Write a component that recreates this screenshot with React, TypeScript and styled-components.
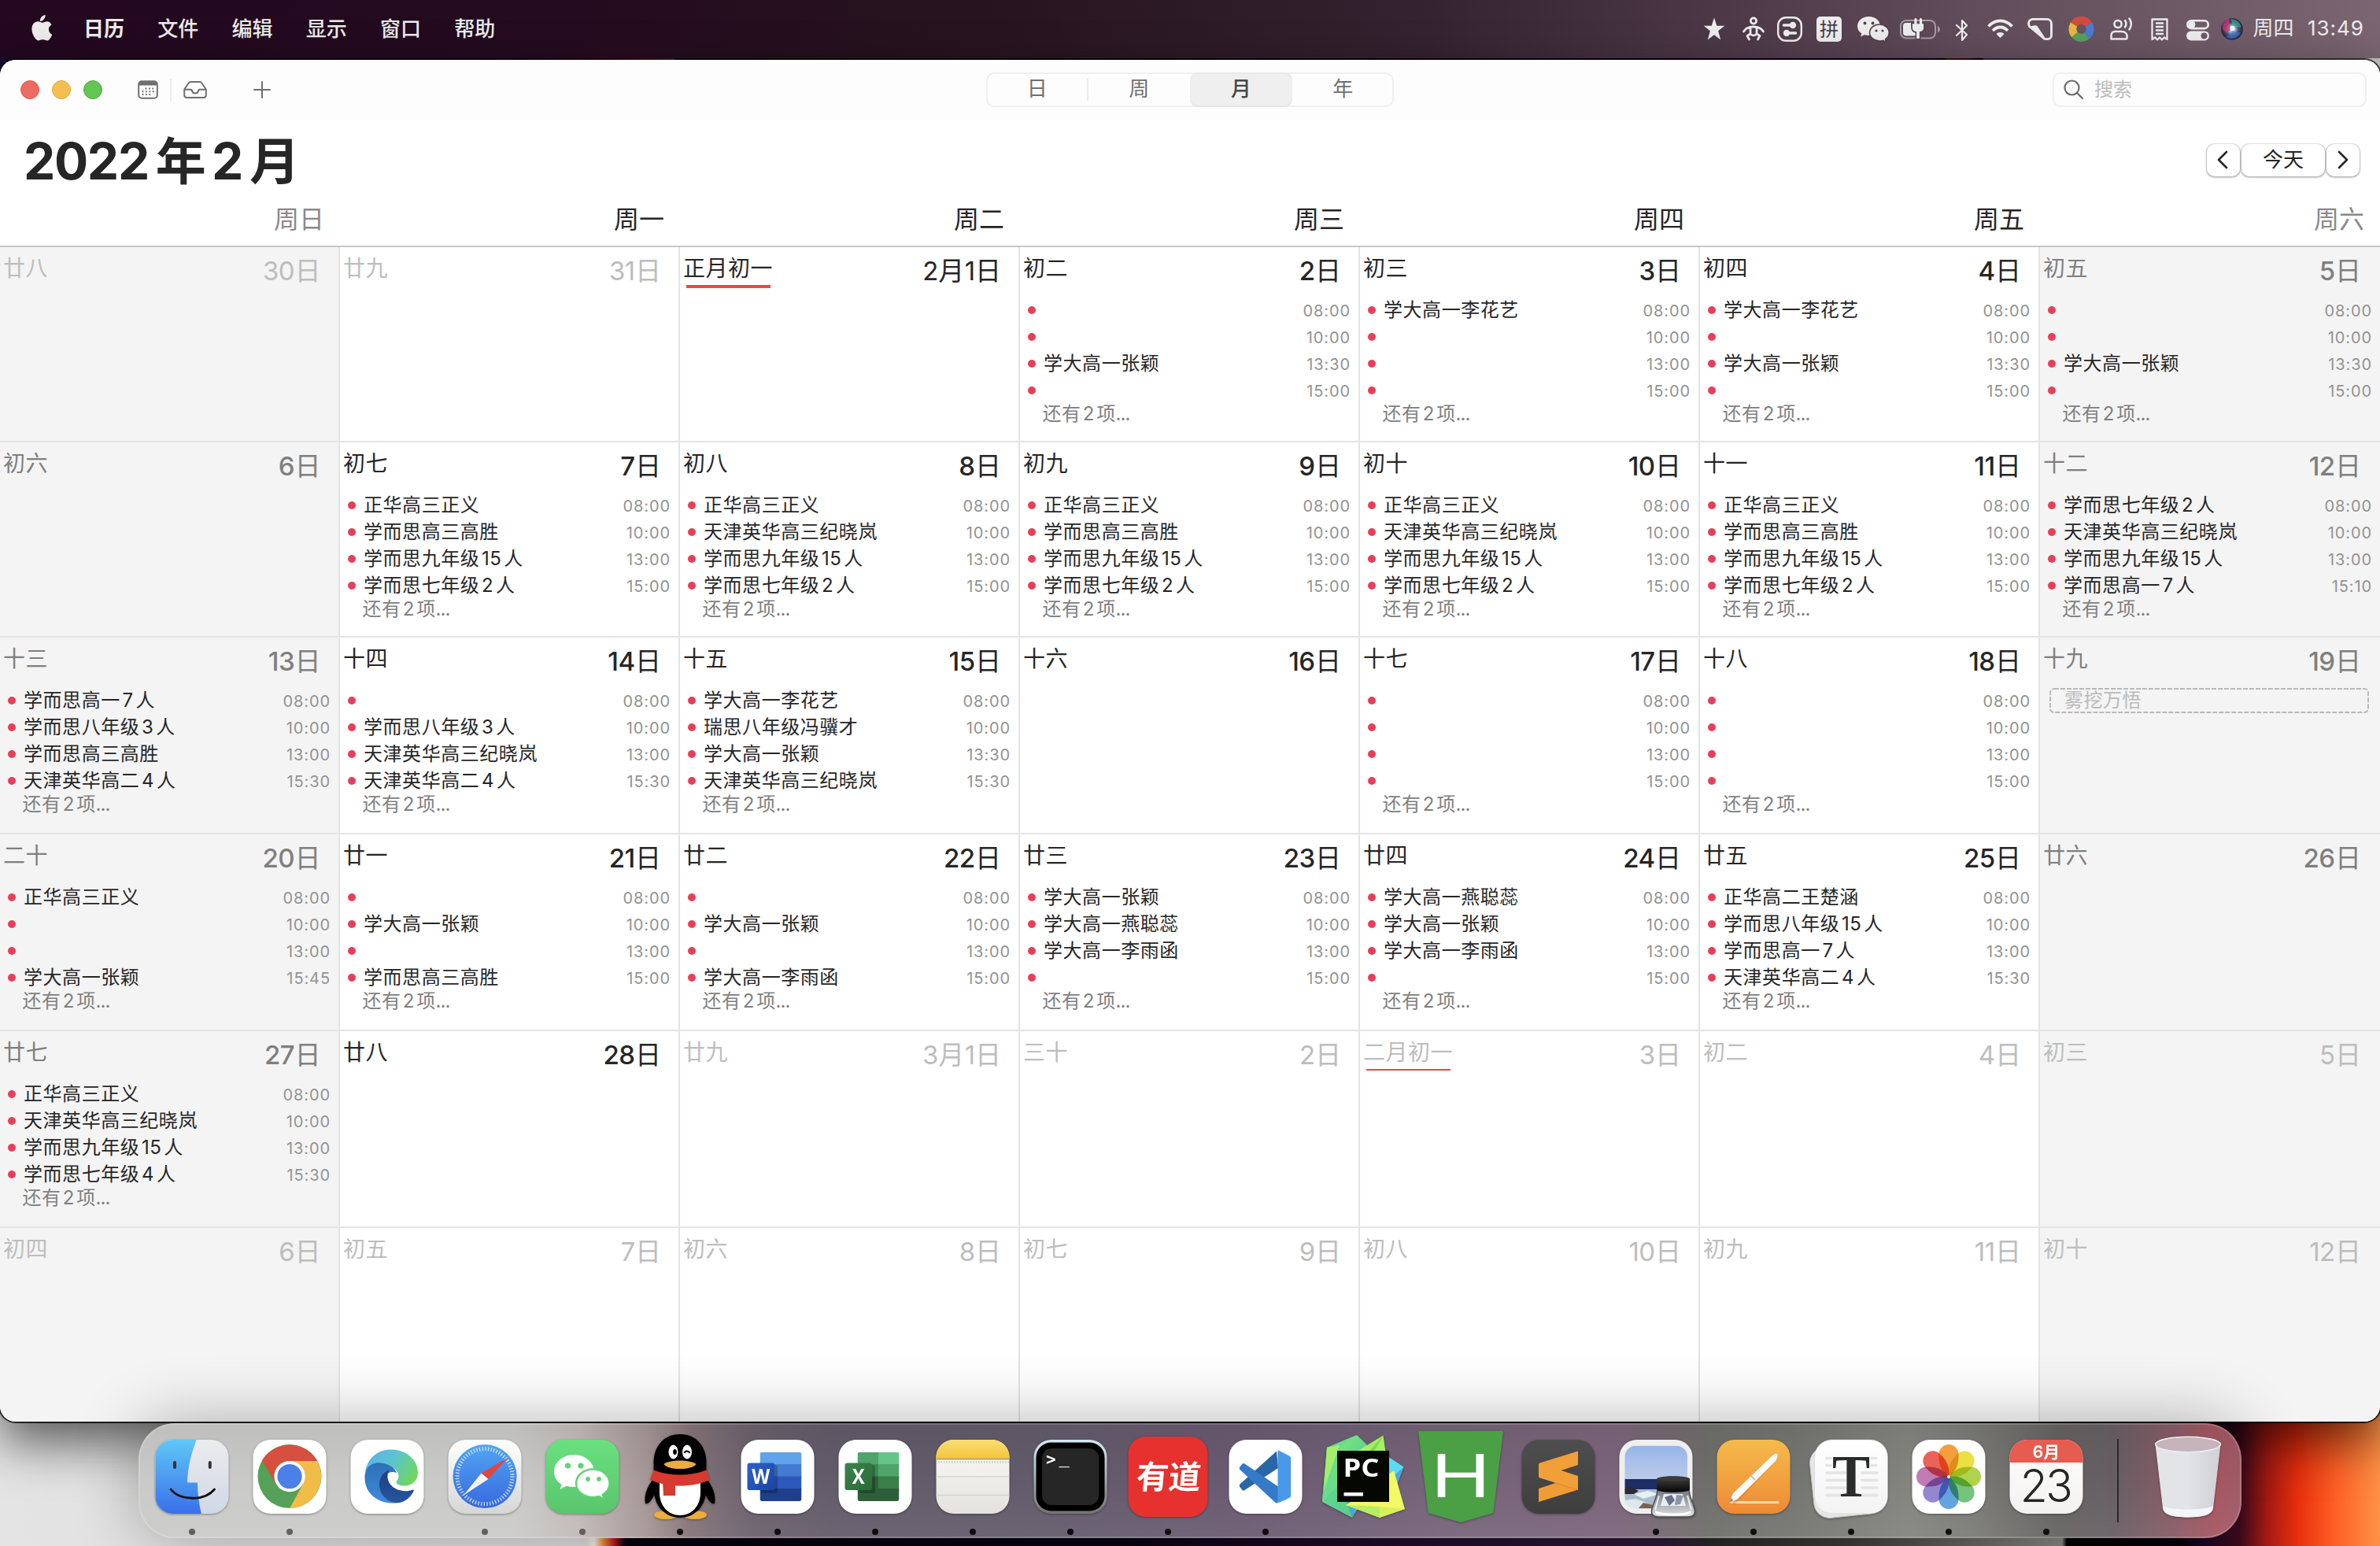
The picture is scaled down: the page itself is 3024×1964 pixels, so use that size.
import React from 'react';
import styled, { createGlobalStyle, css } from 'styled-components';

const FONT = `Inter, "Noto Sans CJK SC", "Noto Sans", sans-serif`;

const GlobalStyle = createGlobalStyle`
  * { box-sizing: border-box; }
  html, body { margin: 0; padding: 0; }
  body { width: 3024px; height: 1964px; overflow: hidden; font-family: ${FONT}; }
`;

/* ---------- shared ---------- */

const Digits = styled.span<{ $first: boolean; $last: boolean; $gap: number }>`
  margin-left: ${p => (p.$first ? 0 : p.$gap)}em;
  margin-right: ${p => (p.$last ? 0 : p.$gap)}em;
`;

const Mixed = ({ text, gap = 0.115 }: { text: string; gap?: number }) => {
  const parts = text.split(/(\d+)/).filter(Boolean);
  return (
    <>
      {parts.map((part, i) =>
        /\d/.test(part) ? (
          <Digits key={i} $first={i === 0} $last={i === parts.length - 1} $gap={gap}>{part}</Digits>
        ) : (
          <React.Fragment key={i}>{part}</React.Fragment>
        ),
      )}
    </>
  );
};

/* ---------- desktop ---------- */

const Desktop = styled.div`
  display: flex;
  flex-direction: column;
  width: 3024px;
  height: 1964px;
  overflow: hidden;
  background:
    linear-gradient(90deg, #160a35 0, #10051c 300px, #0a0210 600px, #a01018 780px, #e06020 840px, #50a0b0 855px, #000 860px, #0a0212 2470px, #d84a10 2476px, #c01020 2500px, #000 2515px, #000 2519px, #a5a5a5 2521px, #c4c4c4 3024px) 0 0 / 3024px 110px no-repeat,
    linear-gradient(90deg, #e4e4e4 0, #dedede 745px, #f3efe4 755px, #ec8a30 767px, #c01c1c 780px, #16061c 792px, #04040d 800px, #060410 1400px, #1b0b26 1700px, #2c1a38 2120px, #292927 2180px, #3c3b38 2350px, #868682 2620px, #000 2626px, #04030a 2770px, #180624 2800px, #3c0a1c 2845px, #a81a12 2880px, #e8300e 2920px, #ff6226 2970px, #ff9246 3024px);
`;

const MenuBar = styled.header`
  display: flex;
  justify-content: space-between;
  height: 74px;
  flex: none;
  background: linear-gradient(90deg, #230820 0, #240b1f 700px, #27131f 1250px, #33222f 1800px, #4a3645 2150px, #614c5b 2500px, #7a6570 3024px);
  color: #ececec;
  font-size: 26px;
  line-height: 74px;
`;

const Menus = styled.nav`
  display: flex;
  align-items: center;
`;

const MenuItem = styled.span<{ $bold?: boolean }>`
  width: ${p => (p.$bold ? 94 : 94.3)}px;
  text-align: center;
  font-weight: ${p => (p.$bold ? 700 : 500)};
`;

const AppleMark = styled.svg`
  width: 28px;
  height: 74px;
  margin: 0 18px 0 39px;
`;

const Status = styled.div`
  display: flex;
  padding-right: 20px;
`;

const StatusIcon = styled.svg<{ $w: number; $ml: number }>`
  flex: none;
  width: ${p => p.$w}px;
  height: 74px;
  margin-left: ${p => p.$ml}px;
  overflow: visible;
`;

const Clock = styled.span<{ $ml: number; $ls?: number }>`
  margin-left: ${p => p.$ml}px;
  letter-spacing: ${p => p.$ls ?? 0}px;
  margin-top: -1px;
`;

/* ---------- window ---------- */

const Window = styled.main`
  display: flex;
  flex-direction: column;
  flex: none;
  height: 1730px;
  margin-top: 2px;
  border-radius: 20px;
  background: #fff;
  overflow: hidden;
  box-shadow: 0 0 0 2px rgba(0, 0, 0, 0.75), 0 26px 64px rgba(0, 0, 0, 0.62);
`;

const Toolbar = styled.div`
  display: grid;
  grid-template-columns: 1fr 518px 1fr;
  align-items: center;
  height: 76px;
  flex: none;
  background: #fdfdfd;
`;

const ToolLeft = styled.div`
  display: flex;
  align-items: center;
  padding-left: 26px;
`;

const Light = styled.span<{ $c: string; $b: string }>`
  width: 24px;
  height: 24px;
  margin-right: 16px;
  border-radius: 50%;
  background: ${p => p.$c};
  border: 1px solid ${p => p.$b};
`;

const ToolIcon = styled.svg<{ $ml: number }>`
  margin-left: ${p => p.$ml}px;
  margin-bottom: 1px;
  overflow: visible;
`;

const ToolRule = styled.span`
  width: 2px;
  height: 28px;
  margin-left: 15px;
  background: #ececec;
`;

const Segments = styled.div`
  display: grid;
  grid-template-columns: repeat(4, 1fr);
  height: 44px;
  border-radius: 10px;
  box-shadow: inset 0 0 0 2px #efefef;
`;

const Segment = styled.div<{ $on?: boolean; $rule?: boolean }>`
  display: flex;
  align-items: center;
  justify-content: center;
  font-size: 26px;
  line-height: 40px;
  padding-bottom: 3px;
  color: #707070;
  ${p => p.$on && css`
    background: #efefef;
    color: #484848;
    font-weight: 500;
    border-radius: 10px;
    box-shadow: inset 0 2px 0 #e9e9e9, inset 0 -2px 0 #e6e6e6;
  `}
  ${p => p.$rule && css`
    background: linear-gradient(#ededed, #ededed) 100% 8px / 2px 28px no-repeat;
  `}
`;

const Search = styled.div`
  display: flex;
  align-items: center;
  justify-self: end;
  width: 399px;
  height: 44px;
  margin-right: 17px;
  padding-left: 12px;
  border: 2px solid #efefef;
  border-radius: 10px;
  font-size: 24px;
  color: #bcbcbc;
  line-height: 38px;
`;

const SearchIcon = styled.svg`
  margin-right: 13px;
`;

const TitleRow = styled.div`
  display: flex;
  justify-content: space-between;
  height: 96px;
  flex: none;
  padding: 7px 26px 0 30px;
`;

const Title = styled.h1`
  margin: 0;
  font-size: 64px;
  line-height: 92px;
  font-weight: 700;
  letter-spacing: -1.9px;
  color: #262626;
  ${Digits} { letter-spacing: -1.3px; }
`;

const Pager = styled.div`
  display: flex;
  gap: 2px;
  margin-top: 24px;
`;

const PagerButton = styled.div<{ $w: number; $nudge?: number }>`
  display: flex;
  align-items: center;
  justify-content: center;
  width: ${p => p.$w}px;
  height: 41px;
  padding: 0 ${p => p.$nudge ?? 0}px 2px 0;
  border-radius: 10px;
  background: #fff;
  box-shadow: 0 0 0 1px rgba(0, 0, 0, 0.07), 0 1px 2px 0.5px rgba(0, 0, 0, 0.22);
  font-size: 26px;
  line-height: 38px;
  color: #262626;
`;

const Weekdays = styled.div`
  display: grid;
  grid-template-columns: repeat(7, 432px);
  height: 66px;
  flex: none;
  border-bottom: 2px solid #c7c5ce;
`;

const Weekday = styled.div<{ $weekend: boolean }>`
  padding: 11px 20px 0 0;
  text-align: right;
  font-size: 32px;
  line-height: 40px;
  color: ${p => (p.$weekend ? '#8a8a8a' : '#262626')};
`;

const Month = styled.div`
  display: grid;
  grid-template-columns: repeat(7, 432px);
  grid-template-rows: 248px 248px 250px 250px 250px 246px;
`;

const Cell = styled.section<{ $weekend: boolean; $lastCol: boolean; $lastRow: boolean }>`
  display: flex;
  flex-direction: column;
  background: ${p => (p.$weekend ? '#f4f4f4' : '#fff')};
  border-right: ${p => (p.$lastCol ? 0 : 2)}px solid #e4e4e4;
  border-bottom: ${p => (p.$lastRow ? 0 : 2)}px solid #e4e4e4;
`;

type Tone = 'dark' | 'gray' | 'faded';
const toneColor: Record<Tone, string> = { dark: '#262626', gray: '#7f7f7f', faded: '#bdbdbd' };

const CellHead = styled.div<{ $tone: Tone; $pad: number }>`
  display: flex;
  justify-content: space-between;
  height: 63px;
  flex: none;
  padding: 0 ${p => p.$pad}px 0 4px;
  color: ${p => toneColor[p.$tone]};
`;

const Lunar = styled.div`
  padding-top: 9px;
  height: 44px;
  font-size: 28px;
  line-height: 36px;
  letter-spacing: 0.5px;
`;

const LunarMark = styled.div<{ $h: number }>`
  width: 107px;
  height: ${p => p.$h}px;
  margin: 4px 0 0 4px;
  background: #ee4a38;
`;

const DateText = styled.div<{ $medium: boolean }>`
  padding-top: 10px;
  font-size: 33px;
  line-height: 40px;
  ${Digits} {
    font-weight: ${p => (p.$medium ? 500 : 400)};
    letter-spacing: -0.6px;
  }
`;

const EventRow = styled.div`
  display: flex;
  align-items: center;
  height: 34px;
  flex: none;
  padding: 0 10px 0 10px;
`;

const Dot = styled.span`
  width: 10px;
  height: 10px;
  border-radius: 50%;
  background: #e73f58;
`;

const EventTitle = styled.span`
  flex: 1;
  margin-left: 10px;
  font-size: 24px;
  line-height: 34px;
  letter-spacing: 0.55px;
  color: #262626;
  white-space: nowrap;
`;

const EventTime = styled.span`
  font-size: 20px;
  line-height: 34px;
  padding-top: 1px;
  letter-spacing: 0.9px;
  color: #929292;
`;

const More = styled.div`
  padding-left: 28.5px;
  font-size: 24px;
  line-height: 26px;
  letter-spacing: 0.4px;
  color: #808080;
`;

const Dots = styled.span`
  letter-spacing: -1px;
`;

const Tentative = styled.div`
  position: relative;
  height: 32px;
  margin: 1px 14px 0 12px;
  padding-left: 19px;
  font-size: 24px;
  line-height: 31px;
  letter-spacing: 0.5px;
  color: #bababa;
`;

const DashFrame = styled.svg`
  position: absolute;
  inset: 0;
`;

/* ---------- dock ---------- */

const Dock = styled.footer`
  position: relative;
  display: flex;
  flex: none;
  width: 2672px;
  height: 146px;
  margin: 2px 0 0 176px;
  padding: 0 5.5px;
  border-radius: 46px;
  background:
    linear-gradient(180deg, rgba(0,0,0,0.06) 0, rgba(0,0,0,0) 50%, rgba(255,255,255,0.06) 100%),
    linear-gradient(90deg, #cacac8 0, #cacac8 480px, #c0b9b7 560px, #a39492 650px, #857479 700px, #6a606c 780px, #625b69 880px, #625b6b 1150px, #6a5a70 1400px, #756378 1650px, #7b647a 1880px, #74696f 1940px, #6e6e6a 2000px, #747470 2100px, #84847f 2250px, #7a7a76 2330px, #646261 2440px, #675e64 2510px, #8a5a66 2590px, #a5565f 2640px, #9f5a69 2672px);
  box-shadow: inset 0 0 0 2px rgba(255, 255, 255, 0.18), 0 0 84px rgba(0, 0, 0, 0.31);
`;

const DockSlot = styled.div`
  display: flex;
  flex-direction: column;
  align-items: center;
  width: 124px;
`;

const DockArt = styled.svg`
  width: 124px;
  height: 134px;
  overflow: visible;
  filter: drop-shadow(0 1px 1.5px rgba(0, 0, 0, 0.35));
`;

const RunDot = styled.span`
  width: 8px;
  height: 8px;
  border-radius: 50%;
  background: rgba(0, 0, 0, 0.92);
  opacity: 0.95;
`;

const SoftRunDot = styled(RunDot)`
  background: #5a5a59;
`;

const DockRule = styled.span`
  width: 2px;
  height: 106px;
  margin: 20px 26px 0 28.5px;
  background: #2b282a;
`;

/* ---------- data ---------- */

type Ev = [string, string];
interface Day {
  lunar: string;
  date: string;
  tone?: Tone;
  events?: Ev[];
  mark?: number;
  tentative?: string;
}

const T = (times: string, ...titles: string[]): Ev[] =>
  times.split(' ').map((t, i) => [titles[i] ?? '', t] as Ev);

const A = '08:00 10:00 13:00 15:00';
const B = '08:00 10:00 13:30 15:00';
const C = '08:00 10:00 13:00 15:30';
const ZH = '正华高三正义';
const GS = '学而思高三高胜';
const JXL = '天津英华高三纪晓岚';
const N15 = '学而思九年级15人';
const Q2 = '学而思七年级2人';
const ZY = '学大高一张颖';
const LHY = '学大高一李花艺';
const G7 = '学而思高一7人';
const B3 = '学而思八年级3人';
const E4 = '天津英华高二4人';
const YCR = '学大高一燕聪蕊';
const LYH = '学大高一李雨函';

const f: Tone = 'faded';
const days: Day[] = [
  { lunar: '廿八', date: '30日', tone: f },
  { lunar: '廿九', date: '31日', tone: f },
  { lunar: '正月初一', date: '2月1日', mark: 4 },
  { lunar: '初二', date: '2日', events: T(B, '', '', ZY, '') },
  { lunar: '初三', date: '3日', events: T(A, LHY, '', '', '') },
  { lunar: '初四', date: '4日', events: T(B, LHY, '', ZY, '') },
  { lunar: '初五', date: '5日', events: T(B, '', '', ZY, '') },

  { lunar: '初六', date: '6日' },
  { lunar: '初七', date: '7日', events: T(A, ZH, GS, N15, Q2) },
  { lunar: '初八', date: '8日', events: T(A, ZH, JXL, N15, Q2) },
  { lunar: '初九', date: '9日', events: T(A, ZH, GS, N15, Q2) },
  { lunar: '初十', date: '10日', events: T(A, ZH, JXL, N15, Q2) },
  { lunar: '十一', date: '11日', events: T(A, ZH, GS, N15, Q2) },
  { lunar: '十二', date: '12日', events: T('08:00 10:00 13:00 15:10', Q2, JXL, N15, G7) },

  { lunar: '十三', date: '13日', events: T(C, G7, B3, GS, E4) },
  { lunar: '十四', date: '14日', events: T(C, '', B3, JXL, E4) },
  { lunar: '十五', date: '15日', events: T('08:00 10:00 13:30 15:30', LHY, '瑞思八年级冯骥才', ZY, JXL) },
  { lunar: '十六', date: '16日' },
  { lunar: '十七', date: '17日', events: T(A) },
  { lunar: '十八', date: '18日', events: T(A) },
  { lunar: '十九', date: '19日', tentative: '雾挖万悟' },

  { lunar: '二十', date: '20日', events: T('08:00 10:00 13:00 15:45', ZH, '', '', ZY) },
  { lunar: '廿一', date: '21日', events: T(A, '', ZY, '', GS) },
  { lunar: '廿二', date: '22日', events: T(A, '', ZY, '', LYH) },
  { lunar: '廿三', date: '23日', events: T(A, ZY, YCR, LYH, '') },
  { lunar: '廿四', date: '24日', events: T(A, YCR, ZY, LYH, '') },
  { lunar: '廿五', date: '25日', events: T(C, '正华高二王楚涵', '学而思八年级15人', G7, E4) },
  { lunar: '廿六', date: '26日' },

  { lunar: '廿七', date: '27日', events: T(C, ZH, JXL, N15, '学而思七年级4人') },
  { lunar: '廿八', date: '28日' },
  { lunar: '廿九', date: '3月1日', tone: f },
  { lunar: '三十', date: '2日', tone: f },
  { lunar: '二月初一', date: '3日', tone: f, mark: 2 },
  { lunar: '初二', date: '4日', tone: f },
  { lunar: '初三', date: '5日', tone: f },

  { lunar: '初四', date: '6日', tone: f },
  { lunar: '初五', date: '7日', tone: f },
  { lunar: '初六', date: '8日', tone: f },
  { lunar: '初七', date: '9日', tone: f },
  { lunar: '初八', date: '10日', tone: f },
  { lunar: '初九', date: '11日', tone: f },
  { lunar: '初十', date: '12日', tone: f },
];

const DayCell = ({ day, index }: { day: Day; index: number }) => {
  const col = index % 7;
  const weekend = col === 0 || col === 6;
  const tone: Tone = day.tone ?? (weekend ? 'gray' : 'dark');
  return (
    <Cell $weekend={weekend} $lastCol={col === 6} $lastRow={index >= 35}>
      <CellHead $tone={tone} $pad={col === 6 ? 24 : col === 0 ? 22.5 : 22}>
        <div>
          <Lunar>{day.lunar}</Lunar>
          {day.mark && <LunarMark $h={day.mark} />}
        </div>
        <DateText $medium={tone !== 'faded' && day.date !== '2月1日'}>
          <Mixed text={day.date} gap={0.015} />
        </DateText>
      </CellHead>
      {day.tentative && (
        <Tentative>
          <DashFrame width="406" height="32">
            <rect x="1" y="1" width="404" height="30" rx="5" fill="none" stroke="#b9b9b9" strokeWidth="2" strokeDasharray="6 2" />
          </DashFrame>
          {day.tentative}
        </Tentative>
      )}
      {day.events?.map(([title, time], i) => (
        <EventRow key={i}>
          <Dot />
          <EventTitle><Mixed text={title} /></EventTitle>
          <EventTime>{time}</EventTime>
        </EventRow>
      ))}
      {day.events && <More><Mixed text="还有2项" gap={0.1} /><Dots>...</Dots></More>}
    </Cell>
  );
};

/* ---------- status icons ---------- */

const W = '#ececec';

const StatusIcons = () => (
  <>
    <StatusIcon $w={26} $ml={0} viewBox="0 0 26 74">
      <path d="M13 22.5l3.3 10.3H26.4l-8.3 6.4 3.1 11.3L13 44.2 4.8 50.5l3.1-11.3L-.4 32.8H9.7z" fill={W} />
    </StatusIcon>
    <StatusIcon $w={28} $ml={23} viewBox="0 0 28 74" fill="none" stroke={W} strokeWidth="2.8" strokeLinecap="round" strokeLinejoin="round">
      <circle cx="14" cy="26.5" r="3.6" />
      <path d="M1.5 40C4 36 8 34 14 34s10 2 12.500 6M10 35v8l-4 2.500 2.500 4.500M18 35v8l4 2.500-2.500 4.500M11 44c2 1.500 4 1.500 6 0" />
    </StatusIcon>
    <StatusIcon $w={32} $ml={16} viewBox="0 0 32 74">
      <rect x="1.200" y="22.200" width="29.600" height="29.600" rx="10" fill="none" stroke={W} strokeWidth="2.400" />
      <path d="M8.500 32H20M12 42h11.500" stroke={W} strokeWidth="3.600" strokeLinecap="round" />
      <circle cx="20" cy="32" r="4.200" fill={W} /><circle cx="12" cy="42" r="4.200" fill={W} />
    </StatusIcon>
    <StatusIcon $w={32} $ml={18} viewBox="0 0 32 74">
      <rect x="0" y="21" width="32" height="32" rx="5" fill={W} />
      <text x="16" y="46" textAnchor="middle" fontSize="24" fontWeight="400" fill="#4d3a48">拼</text>
    </StatusIcon>
    <StatusIcon $w={40} $ml={20} viewBox="0 0 40 74" fill={W}>
      <path d="M14.500 21C6.500 21 0 26.300 0 33.200c0 3.800 2 7.100 5.200 9.300l-1 4 4.800-2.300c1.700.5 3.600.7 5.500.7C22 44.900 29 40 29 33.200 29 26.300 22.500 21 14.500 21z" />
      <path d="M28 31c-6.800 0-12.400 4.600-12.400 10.500S21.200 52 28 52c1.500 0 3-.2 4.300-.6l4 1.800-.8-3.400c2.900-1.900 4.700-4.900 4.700-8.300C40.200 35.600 34.800 31 28 31z" stroke="#54404f" strokeWidth="1.600" />
      <g fill="#54404f"><circle cx="9.500" cy="29.500" r="1.900" /><circle cx="19.500" cy="29.500" r="1.900" /><circle cx="24" cy="39" r="1.600" /><circle cx="32" cy="39" r="1.600" /></g>
    </StatusIcon>
    <StatusIcon $w={51} $ml={14} viewBox="0 0 51 74">
      <rect x="1" y="26" width="44" height="22.500" rx="7" fill="none" stroke={W} strokeOpacity=".5" strokeWidth="2" />
      <path d="M48 33v8.500c1.700-.8 3-2.400 3-4.250S49.700 33.800 48 33z" fill={W} fillOpacity=".5" />
      <rect x="4" y="29" width="19" height="16.500" rx="4" fill={W} />
      <path d="M15 29.500h16v5c0 4-2 6-5.500 6.500v8.500h-5V41C17 40.500 15 38.500 15 34.500z" fill={W} stroke="#5a4655" strokeWidth="1.800" />
      <path d="M20 24.500v6M26.500 24.500v6" stroke={W} strokeWidth="3.200" strokeLinecap="round" />
      <path d="M16 30.500h14v4c0 3.500-2 5-5.200 5.500v9h-3.600v-9C18 39.500 16 38 16 34.500z" fill={W} />
    </StatusIcon>
    <StatusIcon $w={16} $ml={20} viewBox="0 0 16 74" fill="none" stroke={W} strokeWidth="2.200" strokeLinejoin="round" strokeLinecap="round">
      <path d="M1 32l13 12-6 7V26l6 6.500L1 45" />
    </StatusIcon>
    <StatusIcon $w={33} $ml={24} viewBox="0 0 33 74" fill="none" stroke={W} strokeWidth="3.800">
      <path d="M1.500 33.500C5.500 29 10.500 26.300 16.500 26.300s11 2.700 15 7.200M7 39c2.500-2.800 5.500-4.500 9.500-4.500s7 1.700 9.500 4.500" />
      <path d="M16.500 48.300l-5-5c1.300-1.400 3-2.200 5-2.200s3.700.8 5 2.200z" fill={W} stroke="none" />
    </StatusIcon>
    <StatusIcon $w={32} $ml={18} viewBox="0 0 32 74">
      <path d="M6.500 24.400h18.500a5.500 5.500 0 0 1 5.500 5.500V45a4.600 4.600 0 0 1-4.600 4.600h-2.400c-1.500 0-3-.8-3.900-2L2.700 33.500a5.500 5.500 0 0 1-1.200-3.500 5.500 5.500 0 0 1 5-5.600z" fill="none" stroke={W} strokeWidth="2.900" />
      <path d="M3 34.500c3-.5 7.500-3 9-.8L21.500 48z" fill={W} stroke={W} strokeWidth="1.500" />
    </StatusIcon>
    <StatusIcon $w={33} $ml={20} viewBox="0 0 33 74" fill="none" strokeWidth="10">
      <path d="M7.040 31.200A11 11 0 0 1 25.960 31.200" stroke="#d04c3c" />
      <path d="M25.960 31.200A11 11 0 0 1 23.500 45.500" stroke="#4c7bd0" />
      <path d="M23.500 45.500A11 11 0 0 1 8 44" stroke="#56a05c" />
      <path d="M8 44A11 11 0 0 1 7.040 31.200" stroke="#e7b840" />
    </StatusIcon>
    <StatusIcon $w={28} $ml={20} viewBox="0 0 28 74" fill="none" stroke={W} strokeWidth="2.500" strokeLinecap="round">
      <circle cx="10" cy="30.500" r="4.600" />
      <path d="M1.500 49.500v-4.500c0-3 2-5 5-5h7.500c5 0 7.500 2.500 7.500 5.500v2.500c0 1-.5 1.500-1.500 1.500z" strokeLinejoin="round" />
      <path d="M19 26c1.700 2.500 1.700 6 0 8.500M24.500 23.500c3 4.500 3 9.500 0 14" />
    </StatusIcon>
    <StatusIcon $w={22} $ml={24} viewBox="0 0 22 74" fill="none" stroke={W} strokeWidth="2.300">
      <path d="M1.500 50V24.500h19V50l-3.700-2.500-2.900 3-2.900-3-2.900 3-2.900-3z" strokeLinejoin="round" />
      <path d="M6 29.500h10M6 34h10M6 38.500h10M6 43h10" />
    </StatusIcon>
    <StatusIcon $w={29} $ml={23} viewBox="0 0 29 74">
      <rect x="1.300" y="26.300" width="26.400" height="9.800" rx="4.900" fill="none" stroke={W} strokeWidth="2.600" />
      <circle cx="7" cy="31.200" r="4" fill={W} stroke={W} />
      <rect x="0" y="39.500" width="29" height="12" rx="6" fill={W} />
      <circle cx="22.500" cy="45.500" r="4" fill="#6f5a68" />
    </StatusIcon>
    <StatusIcon $w={28} $ml={15} viewBox="0 0 28 74">
      <defs>
        <radialGradient id="siri"><stop offset="0" stopColor="#fff" /><stop offset=".3" stopColor="#9bb4d2" /><stop offset=".6" stopColor="#47507c" /><stop offset="1" stopColor="#241f3a" /></radialGradient>
      </defs>
      <circle cx="14" cy="37" r="13.800" fill="url(#siri)" />
      <path d="M2 36c-1-7 4-12.500 9-12.500C10 29 11 33 13 37 9 42 4 42 2 36z" fill="#d03a76" opacity=".75" />
      <path d="M12 24c8 0 13 5 13.500 11-4-1-8-1-12 1 1-4 1-8-1.500-12z" fill="#3ab88c" opacity=".6" />
      <path d="M6 46c4 0 8-3 8-8 4 3 7 4 11 3-3 8-13 11-19 5z" fill="#3f7ad0" opacity=".6" />
      <circle cx="14.500" cy="36" r="3.200" fill="#fff" opacity=".9" />
    </StatusIcon>
  </>
);

/* ---------- dock icons ---------- */

const Tile = ({ fill = '#fff' }: { fill?: string }) => <rect x="15.500" y="21" width="93" height="94" rx="22" fill={fill} />;

const Grad = ({ id, a, b, h }: { id: string; a: string; b: string; h?: boolean }) => (
  <linearGradient id={id} x1="0" y1="0" x2={h ? 1 : 0} y2={h ? 0 : 1}>
    <stop offset="0" stopColor={a} /><stop offset="1" stopColor={b} />
  </linearGradient>
);

const Finder = () => (
  <>
    <defs><Grad id="fa" a="#62cdf9" b="#386ae9" /><Grad id="fb" a="#ececee" b="#cfd8e5" /><clipPath id="fc"><rect x="15.500" y="21" width="93" height="94" rx="22" /></clipPath></defs>
    <Tile fill="url(#fb)" />
    <path clipPath="url(#fc)" d="M10 15H70C62 35 57 52 56 74q0 1.500 1.500 1.500H69C69 90 71 104 75 120H10z" fill="url(#fa)" />
    <path d="M40 50v6M84.800 50v6" stroke="#333" strokeWidth="4" strokeLinecap="round" />
    <path d="M35 84c12 15 43 15 55.500 0" fill="none" stroke="#111" strokeWidth="2.800" strokeLinecap="round" />
  </>
);

const Chrome = () => (
  <>
    <Tile />
    <circle cx="62" cy="67.600" r="40.500" fill="#54a157" />
    <path d="M62 48H97.100A40.500 40.500 0 0 1 62 108.100L79 77.500z" fill="#f1bd48" />
    <path d="M26.900 47.500A40.500 40.500 0 0 1 97.100 48H62L45 78z" fill="#d64f3f" />
    <circle cx="62" cy="67.600" r="19.600" fill="#fff" />
    <circle cx="62" cy="67.600" r="15.600" fill="#4a80e8" />
  </>
);

const Edge = () => (
  <>
    <defs>
      <linearGradient id="ea" x1="0" y1=".2" x2="1" y2=".6"><stop offset="0" stopColor="#57b2ea" /><stop offset=".5" stopColor="#5cc5cf" /><stop offset="1" stopColor="#6fd65c" /></linearGradient>
      <Grad id="eb" a="#2e6fb8" b="#3f8bdc" /><Grad id="ec" a="#1d3f80" b="#25579f" />
    </defs>
    <Tile />
    <path d="M34 62C37 43 51 33.500 67 33.500c19 0 34 13 34 29 0 10-7 17-17 17-7 0-12-2.500-10-6 5-6 2-14-7-18-10-6-25-5-33 6.500z" fill="url(#ea)" />
    <path d="M33.500 70C33 55 44 49 54 50.500c10 1 18 6 20 13-8-5-19 3-18 15 1 13 14 21 27 20C66 107 34 98 33.500 70z" fill="url(#eb)" />
    <path d="M64 59.500c-14 6-16 24-5 35 12 12 29 7 36.500-8 1-2-.5-2.500-2-1.800C81 90 56 81 64 59.500z" fill="url(#ec)" />
  </>
);

const Safari = () => (
  <>
    <defs><Grad id="sa" a="#fff" b="#d6d6d6" /><Grad id="sb" a="#50a6f2" b="#3868de" /></defs>
    <Tile fill="url(#sa)" />
    <circle cx="62" cy="67.600" r="40.500" fill="url(#sb)" />
    <circle cx="62" cy="67.600" r="35" fill="none" stroke="#dceaff" strokeWidth="5" strokeDasharray="1.200 2.465" />
    <path d="M91 44L66.500 71 57.500 63.500z" fill="#e0483c" />
    <path d="M35 91.500L57.500 63.500l9 7.500z" fill="#f3f3f3" />
  </>
);

const WeChat = () => (
  <>
    <defs><Grad id="wa" a="#69e17f" b="#5ac56d" /></defs>
    <Tile fill="url(#wa)" />
    <path d="M51.500 40C37.500 40 26 49.500 26 61.500c0 7 3.500 12.500 9.500 16.300L33.500 84l8-4.300c3 .9 6.400 1.300 10 1.300C66 81 77 72.500 77 61.500S65.500 40 51.500 40z" fill="#fff" />
    <path d="M75.500 58.500C63.500 58.500 54 66.500 54 76.500S63.500 94 75.500 94c2.600 0 5-.3 7.200-1l7 3.300-2-5.500c5.500-3.200 8.900-8.300 8.900-14.300 0-10-9.400-18-21.100-18z" fill="#fff" stroke="#62d276" strokeWidth="2.400" />
    <g fill="#62d276"><circle cx="43.500" cy="54" r="3.600" /><circle cx="60" cy="54" r="3.600" /><circle cx="69" cy="71" r="2.900" /><circle cx="83" cy="71" r="2.900" /></g>
  </>
);

const QQ = () => (
  <>
    <ellipse cx="44" cy="116.500" rx="15" ry="5.500" fill="#eeac3c" /><ellipse cx="81" cy="116.500" rx="15" ry="5.500" fill="#eeac3c" />
    <path d="M29 70C20 80 16 92 18 102c4 2 9-6 12-12zM95 70c9 10 13 22 11 32-4 2-9-6-12-12z" fill="#000" />
    <path d="M62 14c-21 0-33.500 16-33.500 36V82c0 24 15 38 33.500 38s33.500-14 33.500-38V50C95.500 30 83 14 62 14z" fill="#000" />
    <path d="M36 74h52v14c0 17-11 29-26 29S36 105 36 88z" fill="#fff" />
    <path d="M28.500 59.500c20 8 47 8 67 0L100 72c-22 10-53 10-76 0z" fill="#d63a30" />
    <path d="M40 74l16 3v15H41z" fill="#d63a30" />
    <ellipse cx="53.500" cy="36.500" rx="6" ry="9" fill="#fff" /><ellipse cx="71" cy="36.500" rx="6" ry="9" fill="#fff" />
    <ellipse cx="55.500" cy="36.500" rx="2.400" ry="3.600" /><path d="M67.500 38c1-3.500 5.500-3.500 7 0" fill="none" stroke="#000" strokeWidth="2" />
    <path d="M41.500 52c6-6 35-6 41 0-5 8-36 8-41 0z" fill="#eeac3c" />
  </>
);

const OfficePage = ({ id, cells, badge, badge2, letter }: { id: string; cells: string[][]; badge: string; badge2: string; letter: string }) => (
  <>
    <defs><linearGradient id={id} x1="0" y1="0" x2="1" y2="1"><stop offset="0" stopColor={badge} /><stop offset="1" stopColor={badge2} /></linearGradient><clipPath id={`${id}c`}><rect x="39.500" y="36.700" width="53" height="62.300" rx="3" /></clipPath></defs>
    <Tile />
    <g clipPath={`url(#${id}c)`}>
      {cells.map((row, i) => row.map((c, j) => (
        <rect key={`${i}${j}`} x={39.5 + j * 26.5} y={36.7 + i * 15.4} width={row.length === 1 ? 53 : 26.5} height="17" fill={c} />
      )))}
    </g>
    <rect x="41" y="53" width="21" height="36" rx="3" fill="#000" opacity=".22" />
    <rect x="23.500" y="50.500" width="34.500" height="34.500" rx="3" fill={`url(#${id})`} />
    <text x="40.700" y="77.500" textAnchor="middle" fontSize="27" fontWeight="700" fontFamily="Open Sans, Noto Sans" fill="#fff" transform="translate(40.700 0) scale(.88 1) translate(-40.700 0)">{letter}</text>
  </>
);

const Word = () => <OfficePage id="wd" letter="W" badge="#2d62c8" badge2="#1c44a5" cells={[['#5fa3ea'], ['#447bd0'], ['#2c59bb'], ['#1f3f8c']]} />;
const Excel = () => <OfficePage id="xl" letter="X" badge="#3b8450" badge2="#2c6a35" cells={[['#4fa46b', '#65c489'], ['#3c8a52', '#4fa46b'], ['#2e6038', '#3a7f4a'], ['#2f5f3a', '#2f5f3a']]} />;

const Notes = () => (
  <>
    <defs><Grad id="na" a="#fbdf74" b="#f4c43b" /><Grad id="nb" a="#fbfbf9" b="#e3e2dd" /><clipPath id="nc"><rect x="15.500" y="21" width="93" height="94" rx="22" /></clipPath></defs>
    <Tile fill="url(#nb)" />
    <g clipPath="url(#nc)">
      <rect x="15" y="21" width="94" height="24" fill="url(#na)" />
      <rect x="15" y="44.500" width="94" height="2" fill="#b9a878" />
      <path d="M18 49.500h90" stroke="#b5b5b2" strokeWidth="1.600" strokeDasharray="1.600 1.800" />
      <path d="M15 68h94M15 91.500h94" stroke="#d3d3d3" strokeWidth="1.600" />
    </g>
  </>
);

const Terminal = () => (
  <>
    <defs><Grad id="ta" a="#d5e9f2" b="#73736f" /></defs>
    <Tile fill="url(#ta)" />
    <rect x="18.500" y="24.500" width="87" height="87" rx="19" fill="#000" />
    <rect x="26" y="32" width="72" height="72" rx="12" fill="#262626" />
    <text x="31" y="53" fontSize="21" fontWeight="700" fontFamily="DejaVu Sans Mono" fill="#fff">&gt;</text>
    <text x="47.500" y="53.500" fontSize="22" fontWeight="700" fontFamily="Liberation Mono" fill="#fff">_</text>
  </>
);

const Youdao = () => (
  <>
    <rect x="11.500" y="17" width="101" height="102" rx="22" fill="#e6312e" />
    <text x="62" y="83.500" textAnchor="middle" fontSize="41" fontWeight="700" fill="#fff" fontFamily="Noto Sans CJK SC" transform="translate(7 0) skewX(-5)">有道</text>
  </>
);

const VSCode = () => (
  <>
    <Tile />
    <path d="M76 35.500L78 57 35.500 85q-1.500 1-3 0L29 80.500q-.8-1.500.4-3z" fill="#2a65a6" />
    <path d="M35.500 51.500q-1.500-1-3 0L29 56q-.8 1.500.4 3L74 100.500q2 1.500 4 .5V80.500z" fill="#337ac8" />
    <path d="M77.500 36c0-1.500 1-1.500 2-1L92 41.500q2.200 1.200 2.200 3V92q0 2-2.200 3L80 100.500q-1.500.8-4 .3 1.500-.8 1.500-3z" fill="#4a98e8" />
  </>
);

const PyCharm = () => (
  <>
    <defs><linearGradient id="pa" x1="0" y1="0" x2="1" y2="1"><stop offset="0" stopColor="#9af063" /><stop offset=".4" stopColor="#5fd68f" /><stop offset="1" stopColor="#52c98a" /></linearGradient></defs>
    <path d="M16 31L54 15 90 50 48 120 10 100z" fill="url(#pa)" />
    <path d="M16 31L54 15 30 34 29 80 10 100z" fill="#69dd8b" /><path d="M16 31L32 28 12 85z" fill="#a2f06a" />
    <path d="M54 36L87.500 15.500 91 40z" fill="#a5ef62" /><path d="M70 35L87.500 15.500 76 36z" fill="#7fd84e" />
    <path d="M90 40L113.500 55.500 104 80 92 90z" fill="#5ed9f8" /><path d="M113.500 55.500L104 80 95 72z" fill="#4aa8e4" />
    <path d="M40 98L54 108 48 120z" fill="#4aa6d8" />
    <path d="M101 60L115 109 83 120 40 104 60 92z" fill="#f3f865" /><path d="M40 104L83 106 83 120z" fill="#b5ee62" /><path d="M83 106L115 109 83 120z" fill="#d8f05a" />
    <rect x="29" y="35" width="66" height="65" fill="#050800" />
    <text x="36.500" y="68" fontSize="33" fontWeight="700" fontFamily="Open Sans, Noto Sans" fill="#fff" textLength="46" lengthAdjust="spacingAndGlyphs">PC</text>
    <rect x="37.500" y="88" width="24.500" height="4.500" fill="#fff" />
  </>
);

const HBuilder = () => (
  <>
    <path d="M8 10H116L103.300 114 62 126 20.700 114z" fill="#4b9f45" />
    <text x="0" y="93.700" textAnchor="middle" fontSize="75" fontWeight="400" fill="#fff" transform="translate(62 0) scale(1.370 1)">H</text>
  </>
);

const Sublime = () => (
  <>
    <defs><Grad id="ua" a="#4e4e4e" b="#3e3e3e" /></defs>
    <Tile fill="url(#ua)" />
    <path d="M37 100V83L60 75.500 87 84.500z" fill="#f09c36" /><path d="M56 76L74 70 87 68V85z" fill="#d9822a" />
    <path d="M37 52.500Q37 51 38.500 50.500L87 35.500V53L65.500 60 87 67V84.500L38.500 69.500Q37 69 37 67.500z" fill="#f19f38" />
  </>
);

const Preview = () => (
  <>
    <defs><Grad id="va" a="#96b5ea" b="#bccbe9" /><Grad id="vb" a="#454545" b="#050505" /><Grad id="vc" a="#6d7378" b="#dfe2e4" /><clipPath id="vd"><rect x="22.500" y="28.700" width="79.500" height="79.500" rx="14" /></clipPath></defs>
    <Tile fill="#efeff0" />
    <g clipPath="url(#vd)">
      <rect x="22" y="28" width="81" height="44" fill="url(#va)" />
      <rect x="22" y="71" width="81" height="14" fill="#1d2e66" />
      <rect x="22" y="84" width="81" height="25" fill="#a9bccd" />
      <path d="M22 84l8-3 10 5-6 4H22z" fill="#2b2b33" /><path d="M34 90l18-4 14 4-20 6z" fill="#e9eff4" /><path d="M22 98l14-2 12 4 10 8H22z" fill="#dfe7ee" /><path d="M40 108l6-7 12 3 4 5z" fill="#77634c" />
    </g>
    <path d="M64 84h40q1 10 5 18l2.500 9q.5 8-9 8H65.500q-9.500 0-9-8l2.500-9q4-8 5-18z" fill="url(#vc)" stroke="#4c5054" strokeWidth="1.500" />
    <path d="M72 90h24l4 15H68z" fill="#e9edf2" /><path d="M73 94l9-3 4 7-7 7z" fill="#66708a" /><path d="M88 91l9 1-4 11-7 1z" fill="#8c97aa" />
    <path d="M66 92l-5 18M102 92l5 18" stroke="#fff" strokeWidth="2" opacity=".8" />
    <path d="M63 71c0-5 42-5 42 0v13c0 5-42 5-42 0z" fill="url(#vb)" />
    <ellipse cx="84" cy="70.500" rx="20" ry="3" fill="#3c3c3c" />
    <path d="M61 113c10 4 36 4 46 0" fill="none" stroke="#fff" strokeWidth="3" />
  </>
);

const Pages = () => (
  <>
    <defs><Grad id="ga" a="#f5bb4b" b="#ee8a36" /></defs>
    <Tile fill="url(#ga)" />
    <path d="M34 100.500h59" stroke="#fbd9ae" strokeWidth="3" strokeLinecap="round" />
    <path d="M33 98L84 44" stroke="#b8651a" strokeOpacity=".3" strokeWidth="5" transform="translate(3 4)" />
    <path d="M31 101L36 89 84 43q6-6 8-4t-2 9L41 97z" fill="#fafafa" />
    <path d="M31 101l2.500-6 3 3z" fill="#8a8a8a" /><path d="M59 67l5 5" stroke="#b5b5b5" strokeWidth="1.600" />
  </>
);

const Typora = () => (
  <>
    <rect x="12" y="28" width="88" height="90" rx="20" fill="#e6e6e6" stroke="#c2c2c2" transform="rotate(-6 56 73)" />
    <defs><Grad id="ya" a="#fff" b="#f3f3f3" /></defs>
    <rect x="15.500" y="21" width="93" height="94" rx="22" fill="url(#ya)" stroke="#ccc" strokeWidth=".6" />
    <path d="M31 44.500h5M31 53.500h5M31 63h24M31 72.500h24M31 82h24M31 91.500h24M88 44.500h6M88 53.500h6M76 63h19M76 72.500h19M76 82h19M76 91.500h19" stroke="#e4e4e4" strokeWidth="3.600" strokeLinecap="round" />
    <text x="62" y="93.500" textAnchor="middle" fontSize="76" fontWeight="700" fontFamily="Liberation Serif" fill="#2a2c2c" transform="translate(62 0) scale(.95 1) translate(-62 0)">T</text>
  </>
);

const PETALS = ['#f29a33', '#eade3a', '#abd143', '#6fc077', '#5b9fdd', '#9081cb', '#bd74b2', '#ea5a50'];
const Petals = styled.path`mix-blend-mode: multiply;`;
const Photos = () => (
  <>
    <Tile />
    <g opacity=".95">
      {PETALS.map((c, i) => (
        <Petals key={c} d="M62 68C54 62 49.500 54 49.500 43V39.500a12.500 12.500 0 0 1 25 0V43C74.500 54 70 62 62 68z" fill={c} transform={`rotate(${i * 45} 62 68)`} />
      ))}
    </g>
    <circle cx="62" cy="68" r="2" fill="#fff" />
  </>
);

const CalendarIcon = () => (
  <>
    <defs><Grad id="ka" a="#fff" b="#f3f2f0" /><clipPath id="kc"><rect x="15.500" y="21" width="93" height="94" rx="22" /></clipPath></defs>
    <Tile fill="url(#ka)" />
    <rect clipPath="url(#kc)" x="15" y="21" width="94" height="29" fill="#e65c50" />
    <text x="62" y="44" textAnchor="middle" fontSize="21" fontWeight="600" fill="#fff">6月</text>
    <text x="61" y="100" textAnchor="middle" fontSize="57" fontWeight="300" fill="#262626" letterSpacing="-2.400">23</text>
  </>
);

const Trash = () => (
  <>
    <defs>
      <linearGradient id="ra" x1="0" y1="0" x2="1" y2="0"><stop offset="0" stopColor="#e2e4e6" /><stop offset=".5" stopColor="#e3e4e7" /><stop offset="1" stopColor="#cfd0d4" /></linearGradient>
    </defs>
    <path d="M20.500 27L30 108c1 8 12 11.500 32 11.500S93 116 94 108l9.500-81z" fill="url(#ra)" />
    <path d="M30 105c6 6 56 6 64 0l-.5 4c-2 7-12 10.500-31.500 10.500S32 116 30.500 109z" fill="#f5f6f7" />
    <ellipse cx="62" cy="27" rx="41.300" ry="9.700" fill="#c6b4ba" stroke="#eceef0" strokeWidth="1.600" />
  </>
);

const dockItems: { art: React.FC; run?: 'dark' | 'soft' }[] = [
  { art: Finder, run: 'soft' }, { art: Chrome, run: 'soft' }, { art: Edge }, { art: Safari, run: 'soft' },
  { art: WeChat, run: 'soft' }, { art: QQ, run: 'dark' }, { art: Word, run: 'dark' }, { art: Excel, run: 'dark' },
  { art: Notes, run: 'dark' }, { art: Terminal, run: 'dark' }, { art: Youdao, run: 'dark' }, { art: VSCode, run: 'dark' },
  { art: PyCharm }, { art: HBuilder }, { art: Sublime }, { art: Preview, run: 'dark' },
  { art: Pages, run: 'dark' }, { art: Typora, run: 'dark' }, { art: Photos, run: 'dark' }, { art: CalendarIcon, run: 'dark' },
];

/* ---------- app ---------- */

export default function App() {
  return (
    <>
      <GlobalStyle />
      <Desktop>
        <MenuBar>
          <Menus>
            <AppleMark viewBox="0 0 28 74" fill={W}>
              <path d="M18.500 19c.3 2.300-.6 4.300-1.900 5.800-1.300 1.500-3.100 2.400-4.700 2.200-.3-2.100.7-4.200 1.900-5.500C15.100 20 17 19.100 18.500 19zM26.400 31.600c-2.200 1.400-3.500 3.300-3.500 6 0 3 1.700 5.200 4.300 6.300-.6 1.900-1.500 3.500-2.600 5-1.300 1.900-2.500 2.500-4 2.500-1.900 0-2.800-1.100-5.300-1.100S11.700 51.400 9.900 51.400c-1.700 0-3-1.100-4.300-2.900C2.900 44.800 1.400 41 1.400 36.800c0-5.800 3.600-9.500 7.800-9.500 2.300 0 4.100 1.400 5.700 1.400 1.500 0 3.600-1.500 6.200-1.500 1.900 0 4 .9 5.300 4.400z" />
            </AppleMark>
            <MenuItem $bold>日历</MenuItem>
            {['文件', '编辑', '显示', '窗口', '帮助'].map(m => <MenuItem key={m}>{m}</MenuItem>)}
          </Menus>
          <Status>
            <StatusIcons />
            <Clock $ml={12}>周四</Clock>
            <Clock $ml={17.5} $ls={1}>13:49</Clock>
          </Status>
        </MenuBar>

        <Window>
          <Toolbar>
            <ToolLeft>
              <Light $c="#ed6b60" $b="#dd5a50" />
              <Light $c="#f5bf4f" $b="#dfa73c" />
              <Light $c="#61c654" $b="#50ad42" />
              <ToolIcon $ml={29} width="26" height="24" viewBox="0 0 26 24">
                <rect x="1.200" y="1.200" width="23.600" height="21.600" rx="4" fill="none" stroke="#6f6f6f" strokeWidth="2" />
                <path d="M1 4.500Q1 1 4.500 1h17Q25 1 25 4.500V6.500H1z" fill="#6f6f6f" />
                <path d="M9.500 10.500h11M5.500 14.200h15M5.500 18h11" stroke="#6f6f6f" strokeWidth="1.900" strokeDasharray="1.900 2.500" />
              </ToolIcon>
              <ToolRule />
              <ToolIcon $ml={15} width="30" height="22" viewBox="0 0 30 22" fill="none" stroke="#6f6f6f" strokeWidth="2" strokeLinejoin="round">
                <path d="M1.200 10.500L6.500 2.800Q7.700 1 9.800 1h10.400q2.100 0 3.300 1.800l5.300 7.700V17.500q0 3.500-3.500 3.500H4.700q-3.500 0-3.500-3.500zM1.200 10.800H9.500q1.200 0 1.400 1.200c.4 2.200 2 3.500 4.100 3.500s3.700-1.300 4.100-3.500q.2-1.200 1.400-1.200h8.300" />
              </ToolIcon>
              <ToolIcon $ml={58.5} width="22" height="22" viewBox="0 0 22 22" stroke="#6f6f6f" strokeWidth="2" strokeLinecap="round">
                <path d="M11 1v20M1 11h20" />
              </ToolIcon>
            </ToolLeft>
            <Segments>
              <Segment $rule>日</Segment>
              <Segment>周</Segment>
              <Segment $on>月</Segment>
              <Segment>年</Segment>
            </Segments>
            <Search>
              <SearchIcon width="26" height="26" viewBox="0 0 26 26" fill="none" stroke="#6b6b6b" strokeWidth="2.200" strokeLinecap="round">
                <circle cx="10.500" cy="10.500" r="9" /><path d="M17 17l7 7" />
              </SearchIcon>
              搜索
            </Search>
          </Toolbar>

          <TitleRow>
            <Title><Mixed text="2022年2月" gap={0.14} /></Title>
            <Pager>
              <PagerButton $w={42} $nudge={3}>
                <svg width="14" height="24" viewBox="0 0 14 24" fill="none" stroke="#262626" strokeWidth="2.600" strokeLinecap="round" strokeLinejoin="round"><path d="M12 2L2 12l10 10" /></svg>
              </PagerButton>
              <PagerButton $w={106}>今天</PagerButton>
              <PagerButton $w={42}>
                <svg width="14" height="24" viewBox="0 0 14 24" fill="none" stroke="#262626" strokeWidth="2.600" strokeLinecap="round" strokeLinejoin="round"><path d="M2 2l10 10L2 22" /></svg>
              </PagerButton>
            </Pager>
          </TitleRow>

          <Weekdays>
            {['周日', '周一', '周二', '周三', '周四', '周五', '周六'].map((d, i) => (
              <Weekday key={d} $weekend={i === 0 || i === 6}>{d}</Weekday>
            ))}
          </Weekdays>

          <Month>
            {days.map((d, i) => <DayCell key={i} day={d} index={i} />)}
          </Month>
        </Window>

        <Dock>
          {dockItems.map(({ art: Art, run }, i) => (
            <DockSlot key={i}>
              <DockArt viewBox="0 0 124 134"><Art /></DockArt>
              {run === 'dark' && <RunDot />}
              {run === 'soft' && <SoftRunDot />}
            </DockSlot>
          ))}
          <DockRule />
          <DockSlot><DockArt viewBox="0 0 124 134"><Trash /></DockArt></DockSlot>
        </Dock>
      </Desktop>
    </>
  );
}
